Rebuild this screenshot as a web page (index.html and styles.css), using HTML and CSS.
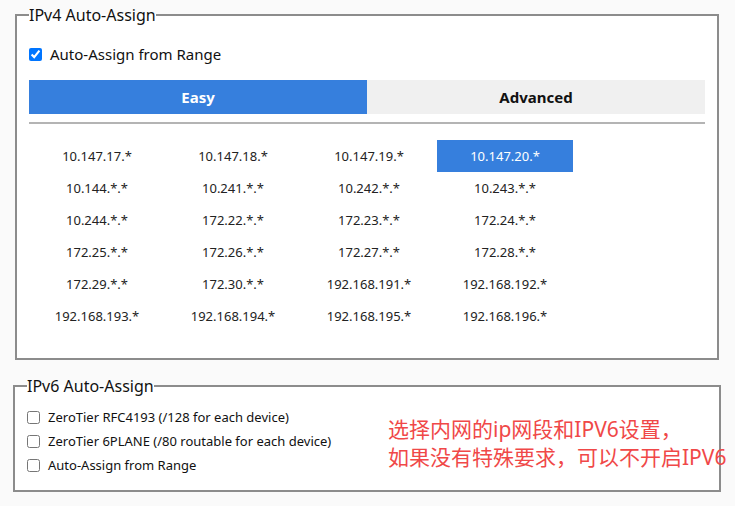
FILE: index.html
```html
<!DOCTYPE html>
<html lang="en">
  <head>
    <meta charset="UTF-8" />
    <meta name="viewport" content="width=device-width, initial-scale=1.0" />
    <title>Managed Routes - Auto-Assign</title>
    <link rel="stylesheet" href="styles.css">
  </head>
  <body>
    <fieldset class="box box-v4">
      <legend>IPv4 Auto-Assign</legend>
      <label class="check-big">
        <input type="checkbox" checked />
        <span>Auto-Assign from Range</span>
      </label>
      <div class="tabs">
        <div class="tab active">Easy</div>
        <div class="tab">Advanced</div>
      </div>
      <div class="tab-line"></div>
      <div class="pool-grid" id="pools"></div>
    </fieldset>

    <fieldset class="box box-v6">
      <legend>IPv6 Auto-Assign</legend>
      <div class="v6-row">
        <div class="v6-list">
          <label class="check-small">
            <input type="checkbox" />
            <span>ZeroTier RFC4193 (/128 for each device)</span>
          </label>
          <label class="check-small">
            <input type="checkbox" />
            <span>ZeroTier 6PLANE (/80 routable for each device)</span>
          </label>
          <label class="check-small">
            <input type="checkbox" />
            <span>Auto-Assign from Range</span>
          </label>
        </div>
        <div class="note">
          选择内网的ip网段和IPV6设置，<br />
          如果没有特殊要求，可以不开启IPV6
        </div>
      </div>
    </fieldset>

    <script>
      const pools = [
        "10.147.17.*", "10.147.18.*", "10.147.19.*", "10.147.20.*",
        "10.144.*.*", "10.241.*.*", "10.242.*.*", "10.243.*.*",
        "10.244.*.*", "172.22.*.*", "172.23.*.*", "172.24.*.*",
        "172.25.*.*", "172.26.*.*", "172.27.*.*", "172.28.*.*",
        "172.29.*.*", "172.30.*.*", "192.168.191.*", "192.168.192.*",
        "192.168.193.*", "192.168.194.*", "192.168.195.*", "192.168.196.*",
      ];
      const selected = "10.147.20.*";
      const grid = document.getElementById("pools");
      pools.forEach((p) => {
        const cell = document.createElement("div");
        cell.className = "pool" + (p === selected ? " picked" : "");
        cell.textContent = p;
        grid.appendChild(cell);
      });
    </script>
  </body>
</html>
```

FILE: styles.css
```css
body {
  margin: 0;
  padding: 4px 0 0 13px;
  background-color: #fafafa;
  font-family: "Segoe UI", "Noto Sans", "Open Sans", sans-serif;
  color: #111;
}

.box {
  box-sizing: border-box;
  min-width: 0;
  margin: 0;
  padding: 0 12px;
  border: 2px solid #8c8c8c;
  background-color: #fff;
}

.box legend {
  padding: 0;
  font-size: 16px;
  line-height: 22px;
}

.box-v4 {
  width: 704px;
  margin-left: 2px;
  padding-top: 18px;
  padding-bottom: 26px;
}

.box-v6 {
  width: 708px;
  margin-top: 15px;
  padding-top: 8px;
  padding-bottom: 13px;
}

.check-big {
  display: flex;
  align-items: center;
  gap: 8px;
  height: 20px;
  font-size: 15px;
}

.check-big input,
.check-small input {
  width: 13px;
  height: 13px;
  margin: 0;
}

.tabs {
  display: flex;
  margin-top: 16px;
}

.tab {
  flex: 1;
  height: 34px;
  line-height: 34px;
  text-align: center;
  font-size: 15px;
  font-weight: bold;
  background-color: #f0f0f0;
}

.tab.active {
  background-color: #367fdd;
  color: #fff;
}

.tab-line {
  margin-top: 8px;
  border-top: 2px solid #b4b4b4;
}

.pool-grid {
  display: grid;
  grid-template-columns: repeat(4, 136px);
  grid-auto-rows: 32px;
  margin-top: 16px;
}

.pool {
  display: flex;
  align-items: center;
  justify-content: center;
  font-size: 13px;
  color: #222;
}

.pool.picked {
  background-color: #367fdd;
  color: #fff;
}

.v6-row {
  display: flex;
  align-items: center;
}

.v6-list {
  flex: 0 0 361px;
}

.check-small {
  display: flex;
  align-items: center;
  gap: 8px;
  height: 24px;
  font-size: 13px;
}

.note {
  flex-shrink: 0;
  white-space: nowrap;
  font-family: "Noto Sans", "Noto Sans CJK SC", sans-serif;
  font-size: 21px;
  line-height: 28px;
  margin-top: 4px;
  color: #f04848;
}
```
